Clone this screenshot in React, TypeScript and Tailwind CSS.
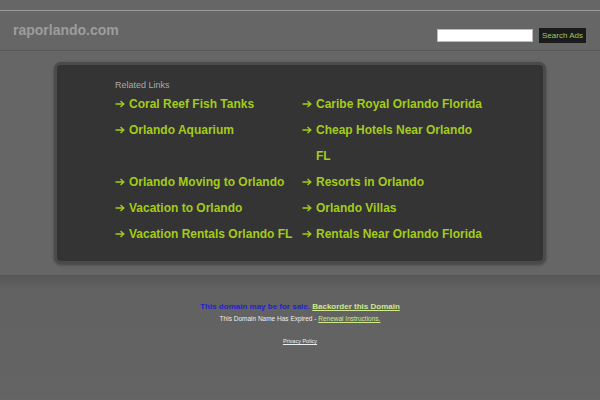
import React from "react";

const links: string[] = [
  "Coral Reef Fish Tanks",
  "Caribe Royal Orlando Florida",
  "Orlando Aquarium",
  "Cheap Hotels Near Orlando FL",
  "Orlando Moving to Orlando",
  "Resorts in Orlando",
  "Vacation to Orlando",
  "Orlando Villas",
  "Vacation Rentals Orlando FL",
  "Rentals Near Orlando Florida",
];

function Arrow() {
  return (
    <svg width="10" height="8" viewBox="0 0 10 8" className="mt-[9px] shrink-0" fill="none">
      <path d="M0.5 4H8.5M5.5 1L8.8 4L5.5 7" stroke="#a3cc1a" strokeWidth="1.4" />
    </svg>
  );
}

export default function App() {
  return (
    <div className="min-h-[400px] bg-[#666666] font-['Liberation_Sans',Arial,sans-serif]">
      <div className="h-[10px]" />

      {/* header */}
      <header className="flex h-[41px] justify-between border-t border-b border-t-[#9a9a9a] border-b-[#575757] pl-[13px] pr-[14px]">
        <div className="mt-[11px] text-[14px] font-bold leading-[16px] text-[#9d9d9d]">raporlando.com</div>
        <div className="mt-[17px] flex items-center gap-[6px] self-start">
          <input
            type="text"
            className="h-[13px] w-[96px] border border-[#bbbbbb] bg-white outline-none"
          />
          <button className="h-[15px] w-[47px] bg-[#1b1b1b] pl-[3px] text-left text-[8px] leading-[15px] text-[#9fc766]">
            Search Ads
          </button>
        </div>
      </header>

      {/* related links panel */}
      <main className="pt-[11px] pb-[11px]">
        <div className="mx-auto w-[492px] rounded-[7px] border-[3px] border-[#4b4b4b] bg-[#343434] pt-[14px] pb-[14px] pl-[58px] shadow-[0_1px_3px_rgba(0,0,0,0.35)]">
          <div className="text-[9px] leading-[12px] text-[#a9a9a9]">Related Links</div>
          <ul className="grid grid-cols-[187px_187px]">
            {links.map((l) => (
              <li key={l} className="flex gap-[4px] text-[12px] font-bold leading-[26px] text-[#a3cc1a]">
                <Arrow />
                <a href="#" className="pr-[6px]">{l}</a>
              </li>
            ))}
          </ul>
        </div>
      </main>

      {/* footer */}
      <footer className="min-h-[124px] bg-[linear-gradient(#575757,#626262_14px,#646464)] pt-[27px] text-center">
        <div className="text-[8px] font-bold leading-[10px]">
          <span className="text-[#2323c8]">This domain may be for sale. </span>
          <a href="#" className="text-[#cfe98c] underline">Backorder this Domain</a>
        </div>
        <div className="mt-[3px] text-[6.5px] leading-[8px] text-[#eeeeee]">
          This Domain Name Has Expired -{" "}
          <a href="#" className="text-[#cfe98c] underline">Renewal Instructions.</a>
        </div>
        <div className="mt-[15px] text-[5.5px] leading-[7px]">
          <a href="#" className="text-[#eeeeee] underline">Privacy Policy</a>
        </div>
      </footer>
    </div>
  );
}
